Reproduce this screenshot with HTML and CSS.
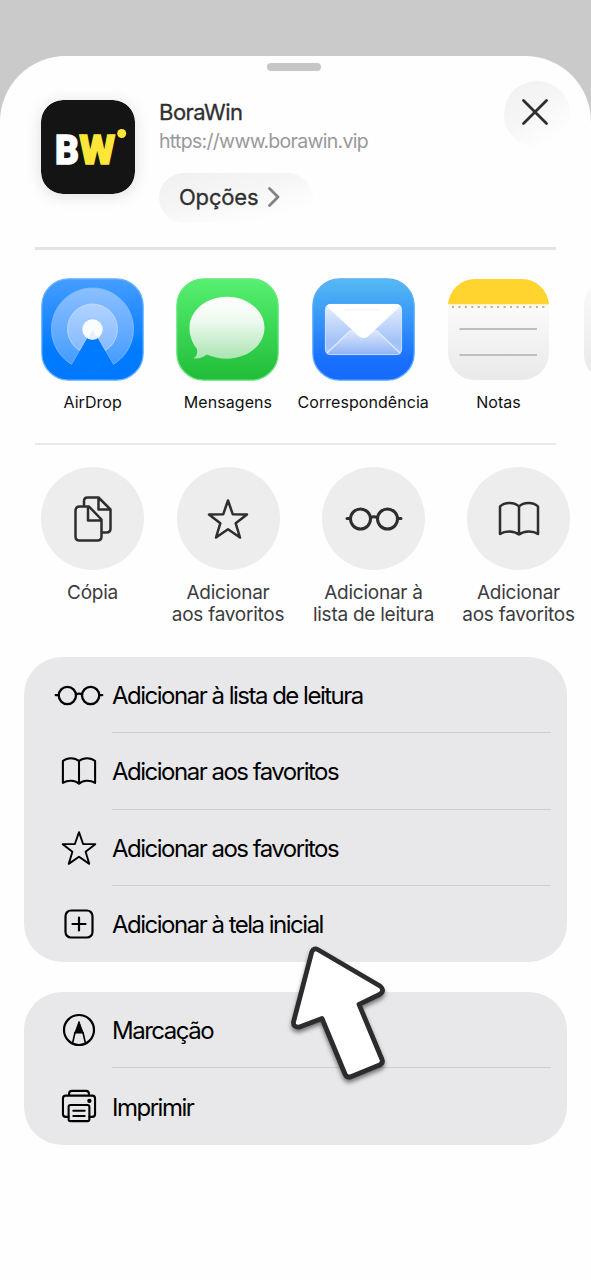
FILE: index.html
```html
<!DOCTYPE html>
<html lang="pt-BR">
<head>
<meta charset="utf-8">
<meta name="viewport" content="width=device-width">
<title>BoraWin</title>
<link rel="stylesheet" href="styles.css">
</head>
<body>
<svg class="defs" width="0" height="0" aria-hidden="true">
  <defs>
    <symbol id="glasses" viewBox="0 0 58 24">
      <circle cx="15.500" cy="12" r="10"/><circle cx="42.500" cy="12" r="10"/>
      <path d="M25.500 10.500q3.500-1.500 7 0M2 11.500h3.500M52.500 11.500h3.500"/>
    </symbol>
    <symbol id="book" viewBox="0 0 42 36">
      <path d="M21 5.500C16.500 .8 6.500 .8 2 5.500V33C7 29.500 16 29.500 21 33.500C26 29.500 35 29.500 40 33V5.500C35.500 .8 25.500 .8 21 5.500ZM21 5.500V33.500"/>
    </symbol>
    <symbol id="star" viewBox="0 0 42 42">
      <path d="M21 2.500L25.800 16.300L40 16.500L28.700 25.300L33 39.500L21 31.200L9 39.500L13.300 25.300L2 16.500L16.200 16.300Z"/>
    </symbol>
  </defs>
</svg>
<main class="sheet">
  <div class="grabber"></div>
  <header class="header">
    <svg class="logo" viewBox="0 0 94 94">
      <rect width="94" height="94" rx="22" fill="#141414"/>
      <text class="logo-text" x="14" y="63.500" fill="#fff" stroke="#fff" textLength="24" lengthAdjust="spacingAndGlyphs">B</text>
      <text class="logo-text" x="38.200" y="63.500" fill="#ffe638" stroke="#ffe638" textLength="36" lengthAdjust="spacingAndGlyphs">W</text>
      <circle cx="80.700" cy="33.500" r="4.500" fill="#ffe638"/>
    </svg>
    <div class="site">
      <h1 class="site-name">BoraWin</h1>
      <p class="site-url">https://www.borawin.vip</p>
      <button class="options"><span>Opções</span>
        <svg width="12" height="20" viewBox="0 0 12 20"><path d="M1.500 1.500L10 10L1.500 18.500" fill="none" stroke="#828284" stroke-width="2.800" stroke-linecap="round" stroke-linejoin="round"/></svg>
      </button>
    </div>
    <button class="close" aria-label="Fechar">
      <svg width="28" height="28" viewBox="0 0 28 28"><path d="M2.500 2.500L25.500 25.500M25.500 2.500L2.500 25.500" stroke="#2e2e30" stroke-width="2.800" stroke-linecap="round"/></svg>
    </button>
  </header>

  <section class="apps">
    <div class="app">
      <svg class="app-icon" viewBox="0 0 103 103">
        <defs>
          <linearGradient id="air" x2="0" y2="1"><stop offset="0" stop-color="#479dff"/><stop offset=".7" stop-color="#007bff"/><stop offset="1" stop-color="#0078ff"/></linearGradient>
          <linearGradient id="ring1" x2="0" y2="1"><stop offset="0" stop-color="#8bbfff"/><stop offset="1" stop-color="#459cff"/></linearGradient>
          <linearGradient id="ring2" x2="0" y2="1"><stop offset="0" stop-color="#b1d3ff"/><stop offset="1" stop-color="#85baff"/></linearGradient>
        </defs>
        <rect x=".8" y=".8" width="101.400" height="101.400" rx="27" fill="url(#air)" stroke="#6ab3ff" stroke-width="1.200"/>
        <path d="M51.500 51L30.700 86.300A41 41 0 1 1 72.300 86.300Z" fill="url(#ring1)" stroke="#84bdff" stroke-width=".8"/>
        <path d="M51.500 51L38.800 72.500A25 25 0 1 1 64.200 72.500Z" fill="url(#ring2)" stroke="#c0dcff" stroke-width=".8"/>
        <path d="M51.500 51L31.200 86L51.500 96L71.800 86Z" fill="#007bff"/>
        <circle cx="51.500" cy="51.500" r="10.200" fill="#fafcff"/>
        <path d="M51.500 52L47 60.500Q51.500 62.500 56 60.500Z" fill="#e6f0fb"/>
      </svg>
      <span class="app-name">AirDrop</span>
    </div>
    <div class="app">
      <svg class="app-icon" viewBox="0 0 103 103">
        <defs>
          <linearGradient id="msg" x2="0" y2="1"><stop offset="0" stop-color="#57f071"/><stop offset="1" stop-color="#20bd38"/></linearGradient>
          <linearGradient id="bubble" x2="0" y2="1"><stop offset="0" stop-color="#fff"/><stop offset=".4" stop-color="#edf9ef"/><stop offset="1" stop-color="#aae5b2"/></linearGradient>
        </defs>
        <rect x=".8" y=".8" width="101.400" height="101.400" rx="27" fill="url(#msg)" stroke="#6de57f" stroke-width="1.200"/>
        <path d="M51 18.700C71.700 18.700 88.500 32.600 88.500 49.700S71.700 80.700 51 80.700C43.500 80.700 36.500 79 30.700 76.500C26.500 79.800 22 80.900 17.800 80.200C21 78 21.800 75 20.800 70.500C16 65 13.500 57.500 13.500 49.700C13.500 32.600 30.300 18.700 51 18.700Z" fill="url(#bubble)"/>
      </svg>
      <span class="app-name">Mensagens</span>
    </div>
    <div class="app">
      <svg class="app-icon" viewBox="0 0 103 103">
        <defs>
          <linearGradient id="mail" x2="0" y2="1"><stop offset="0" stop-color="#55baf3"/><stop offset=".8" stop-color="#1870fc"/><stop offset="1" stop-color="#1769fb"/></linearGradient>
          <linearGradient id="env" x2="0" y2="1"><stop offset="0" stop-color="#e8f1fe"/><stop offset=".75" stop-color="#a0c0f7"/><stop offset="1" stop-color="#a9c7fa"/></linearGradient>
          <linearGradient id="fold" x2="0" y2="1"><stop offset="0" stop-color="#dfe9fb"/><stop offset="1" stop-color="#8fb3f5"/></linearGradient>
        </defs>
        <rect x=".8" y=".8" width="101.400" height="101.400" rx="27" fill="url(#mail)" stroke="#5faef9" stroke-width="1.200"/>
        <rect x="13" y="26" width="77" height="51" rx="5.500" fill="url(#env)"/>
        <path d="M14 75L38 52H65L89 75Q88 77 84 77H19Q15 77 14 75Z" fill="url(#fold)"/>
        <path d="M15 75L38 53M88 75L65 53" stroke="#dce8ff" stroke-width="1.500"/>
        <rect x="13.400" y="26.400" width="76.200" height="50.200" rx="5.500" fill="none" stroke="#cfe0ff" stroke-width=".8"/>
        <path d="M14.500 28Q16 26 19 26H84Q87 26 88.500 28L57 57.500Q51.500 62.500 46 57.500Z" fill="#fff"/>
        <path d="M33 31.800H70" stroke="#f0f1f4" stroke-width="1"/>
      </svg>
      <span class="app-name">Correspondência</span>
    </div>
    <div class="app">
      <svg class="app-icon" viewBox="0 0 103 103">
        <defs>
          <linearGradient id="note" x2="0" y2="1"><stop offset=".25" stop-color="#fbfbfb"/><stop offset="1" stop-color="#e9e9e9"/></linearGradient>
          <clipPath id="note-clip"><rect x="1" y="1" width="101" height="101" rx="27"/></clipPath>
        </defs>
        <g clip-path="url(#note-clip)">
          <rect width="103" height="103" fill="url(#note)"/>
          <rect width="103" height="26" fill="#ffd42f"/>
          <rect y="26" width="103" height="1.500" fill="#fff3bd"/>
          <path d="M5 29H101" stroke="#b5b2aa" stroke-width="2" stroke-dasharray="2 4.450"/>
          <path d="M12.500 51H90M12.500 77H90" stroke="#bfbfbf" stroke-width="1.800"/>
        </g>
      </svg>
      <span class="app-name">Notas</span>
    </div>
    <div class="app app-next"><div class="app-more"></div></div>
  </section>

  <section class="actions">
    <div class="action">
      <div class="disc">
        <svg width="40" height="48" viewBox="0 0 40 48">
          <path d="M11 10.500V6Q11 2.500 14.500 2.500H25.500L37.500 14.500V33.500Q37.500 37.500 33.500 37.500H28.500M25.500 2.500V14.500H37.500M2.500 16Q2.500 11.500 6.500 11.500H16L28.500 24.500V41.500Q28.500 45.500 24.500 45.500H6.500Q2.500 45.500 2.500 41.500ZM15 11.500V25.500H28.500"/>
        </svg>
      </div>
      <span class="action-name">Cópia</span>
    </div>
    <div class="action">
      <div class="disc"><svg width="42" height="42"><use href="#star"/></svg></div>
      <span class="action-name">Adicionar<br>aos favoritos</span>
    </div>
    <div class="action">
      <div class="disc"><svg class="bold" width="58" height="24"><use href="#glasses"/></svg></div>
      <span class="action-name">Adicionar à<br>lista de leitura</span>
    </div>
    <div class="action">
      <div class="disc"><svg width="42" height="36"><use href="#book"/></svg></div>
      <span class="action-name">Adicionar<br>aos favoritos</span>
    </div>
  </section>

  <ul class="list">
    <li class="row"><span class="row-icon"><svg class="bold" width="50" height="21"><use href="#glasses"/></svg></span><span class="row-name">Adicionar à lista de leitura</span></li>
    <li class="row"><span class="row-icon"><svg width="36" height="30" viewBox="0 0 38 31"><path d="M19 5C14.500 1 6.500 1 2 5V28C7 25 15 25 19 29C23 25 31 25 36 28V5C31.500 1 23.500 1 19 5ZM19 5V29"/></svg></span><span class="row-name">Adicionar aos favoritos</span></li>
    <li class="row"><span class="row-icon"><svg width="36" height="36"><use href="#star"/></svg></span><span class="row-name">Adicionar aos favoritos</span></li>
    <li class="row"><span class="row-icon"><svg width="30" height="30" viewBox="0 0 30 30"><rect x="1.500" y="1.500" width="27" height="27" rx="5.500"/><path d="M15 8.500V21.500M8.500 15H21.500"/></svg></span><span class="row-name">Adicionar à tela inicial</span></li>
  </ul>
  <ul class="list">
    <li class="row"><span class="row-icon"><svg width="34" height="34" viewBox="0 0 34 34"><circle cx="17" cy="17" r="15"/><path d="M10.500 30.500L13 19.500M21 19.500L23.500 30.500M13 19.500H21" stroke-width="1.600"/><path d="M13 19.500L17 8.500L21 19.500Z" fill="#000" stroke-width="1"/></svg></span><span class="row-name">Marcação</span></li>
    <li class="row"><span class="row-icon"><svg width="36" height="34" viewBox="0 0 38 36"><path d="M8.500 7V5Q8.500 2 11.500 2H26.500Q29.500 2 29.500 5V7M8 29.500H5Q2 29.500 2 26.500V10Q2 7 5 7H33Q36 7 36 10V26.500Q36 29.500 33 29.500H30"/><rect x="8" y="17" width="22" height="17" rx="2"/><path d="M13 23H25M13 28.500H25"/><circle cx="30" cy="12.500" r="1.200" fill="#000"/></svg></span><span class="row-name">Imprimir</span></li>
  </ul>
  <svg class="pointer" width="120" height="160" viewBox="0 0 120 160">
    <path d="M31.800 17Q33.500 12.200 38.500 15L100 51Q105.500 55.500 99.500 59.500L79 69.300L101.800 124Q103.500 128 99.500 130L71.500 141.500Q67 143.500 65 139L42 83.500L19.500 92Q13 92.500 13.500 87Z" fill="#fff" stroke="#2c2c2e" stroke-width="4.800" stroke-linejoin="round"/>
  </svg>
</main>
</body>
</html>
```
FILE: styles.css
```css
* { box-sizing: border-box; }

body {
  margin: 0;
  padding-top: 56px;
  background: #cacaca;
  font-family: Inter, "Liberation Sans", sans-serif;
  overflow: hidden;
}

h1, p, ul { margin: 0; padding: 0; }
button { border: 0; font: inherit; }
svg { display: block; flex: none; }
.defs { position: absolute; }

.sheet {
  position: relative;
  height: 1224px;
  padding-top: 7px;
  background: #fefefe;
  border-radius: 66px 66px 0 0;
  overflow: hidden;
}

.grabber {
  width: 54px;
  height: 8px;
  margin: 0 0 0 267px;
  border-radius: 4px;
  background: #c6c6c8;
}

.header {
  display: flex;
  align-items: flex-start;
  height: 179px;
  margin: 0 35px;
  padding: 10px 0 0 6px;
  border-bottom: 3px solid #e4e4e5;
}

.logo {
  width: 94px;
  height: 94px;
  margin-top: 19px;
  border-radius: 22px;
  box-shadow: 0 2px 16px rgba(0, 0, 0, .13);
}

.logo-text {
  font: 900 41px Roboto, sans-serif;
  stroke-width: 1.300px;
}

.site { margin: 19px 0 0 24px; }

.site-name {
  font-size: 22px;
  font-weight: 400;
  line-height: 24px;
  letter-spacing: -.5px;
  color: #303032;
  -webkit-text-stroke: .3px #303032;
}

.site-url {
  margin-top: 5px;
  font-size: 19.500px;
  line-height: 25px;
  letter-spacing: -.7px;
  color: #99999b;
}

.options {
  display: flex;
  align-items: center;
  gap: 10px;
  width: 154px;
  height: 50px;
  margin-top: 19px;
  padding: 0 0 2px 20px;
  border-radius: 25px;
  background: linear-gradient(165deg, #f0f0f1 0, #f5f5f5 40%, #fefefe 82%);
  font-size: 22px;
  font-weight: 400;
  letter-spacing: -.2px;
  color: #303032;
  -webkit-text-stroke: .3px #303032;
}

.close {
  display: flex;
  align-items: center;
  justify-content: center;
  width: 66px;
  height: 66px;
  margin: 0 -14px 0 auto;
  padding: 0 4px 4px 0;
  border-radius: 50%;
  background: linear-gradient(145deg, #f1f1f2 0, #f6f6f6 45%, #fefefe 82%);
}

.apps {
  display: flex;
  height: 194px;
  padding: 28px 0 0 25px;
}

.app {
  display: flex;
  flex: none;
  flex-direction: column;
  align-items: center;
  width: 135.300px;
}

.app-icon { width: 103px; height: 103px; }

.app-name {
  margin-top: 11px;
  font-size: 16px;
  line-height: 20px;
  letter-spacing: .05px;
  color: #111;
}

.app-next { align-items: flex-start; padding-left: 18px; }

.app-more {
  width: 101px;
  height: 101px;
  margin-top: 1px;
  border-radius: 25px;
  background: linear-gradient(#fafafa, #e9e9e9);
}

.actions {
  position: relative;
  display: grid;
  grid-template-columns: 135px 136px 155px 135px;
  height: 214px;
  margin: -1px 0 0 25px;
  padding-top: 24px;
}

.actions::before {
  content: "";
  position: absolute;
  top: 0;
  left: 10px;
  width: 521px;
  height: 2px;
  background: #e8e8e9;
}

.action {
  display: flex;
  flex-direction: column;
  align-items: center;
}

.disc {
  display: flex;
  align-items: center;
  justify-content: center;
  width: 103px;
  height: 103px;
  border-radius: 50%;
  background: #ededed;
}

.disc svg, .row-icon svg {
  fill: none;
  stroke: #2e2e2e;
  stroke-width: 2.500px;
  stroke-linecap: round;
  stroke-linejoin: round;
}

.disc .bold { stroke-width: 3px; }

.action-name {
  margin-top: 12px;
  font-size: 19px;
  line-height: 22px;
  letter-spacing: -.25px;
  text-align: center;
  white-space: nowrap;
  color: #3c3c3e;
}

.list {
  margin: 0 24px 30px;
  border-radius: 38px;
  background: #e8e8ea;
  list-style: none;
}

.row {
  display: grid;
  grid-template-columns: 88px 1fr;
  align-items: center;
  height: 76.250px;
  margin-right: 16px;
}

.row-icon {
  display: flex;
  justify-content: center;
  padding-left: 22px;
}

.row-icon svg { stroke: #000; stroke-width: 2.200px; }
.row-icon .bold { stroke-width: 2.700px; }

.row-name {
  display: flex;
  align-items: center;
  height: 100%;
  padding-top: 2px;
  border-bottom: 1px solid #cdcdcf;
  font-size: 24px;
  letter-spacing: -1.500px;
  white-space: nowrap;
  color: #000;
}

.row:last-child .row-name { border-bottom: 0; }

.pointer {
  position: absolute;
  left: 280px;
  top: 879px;
  filter: drop-shadow(0 3px 2px rgba(0, 0, 0, .5));
}
```
